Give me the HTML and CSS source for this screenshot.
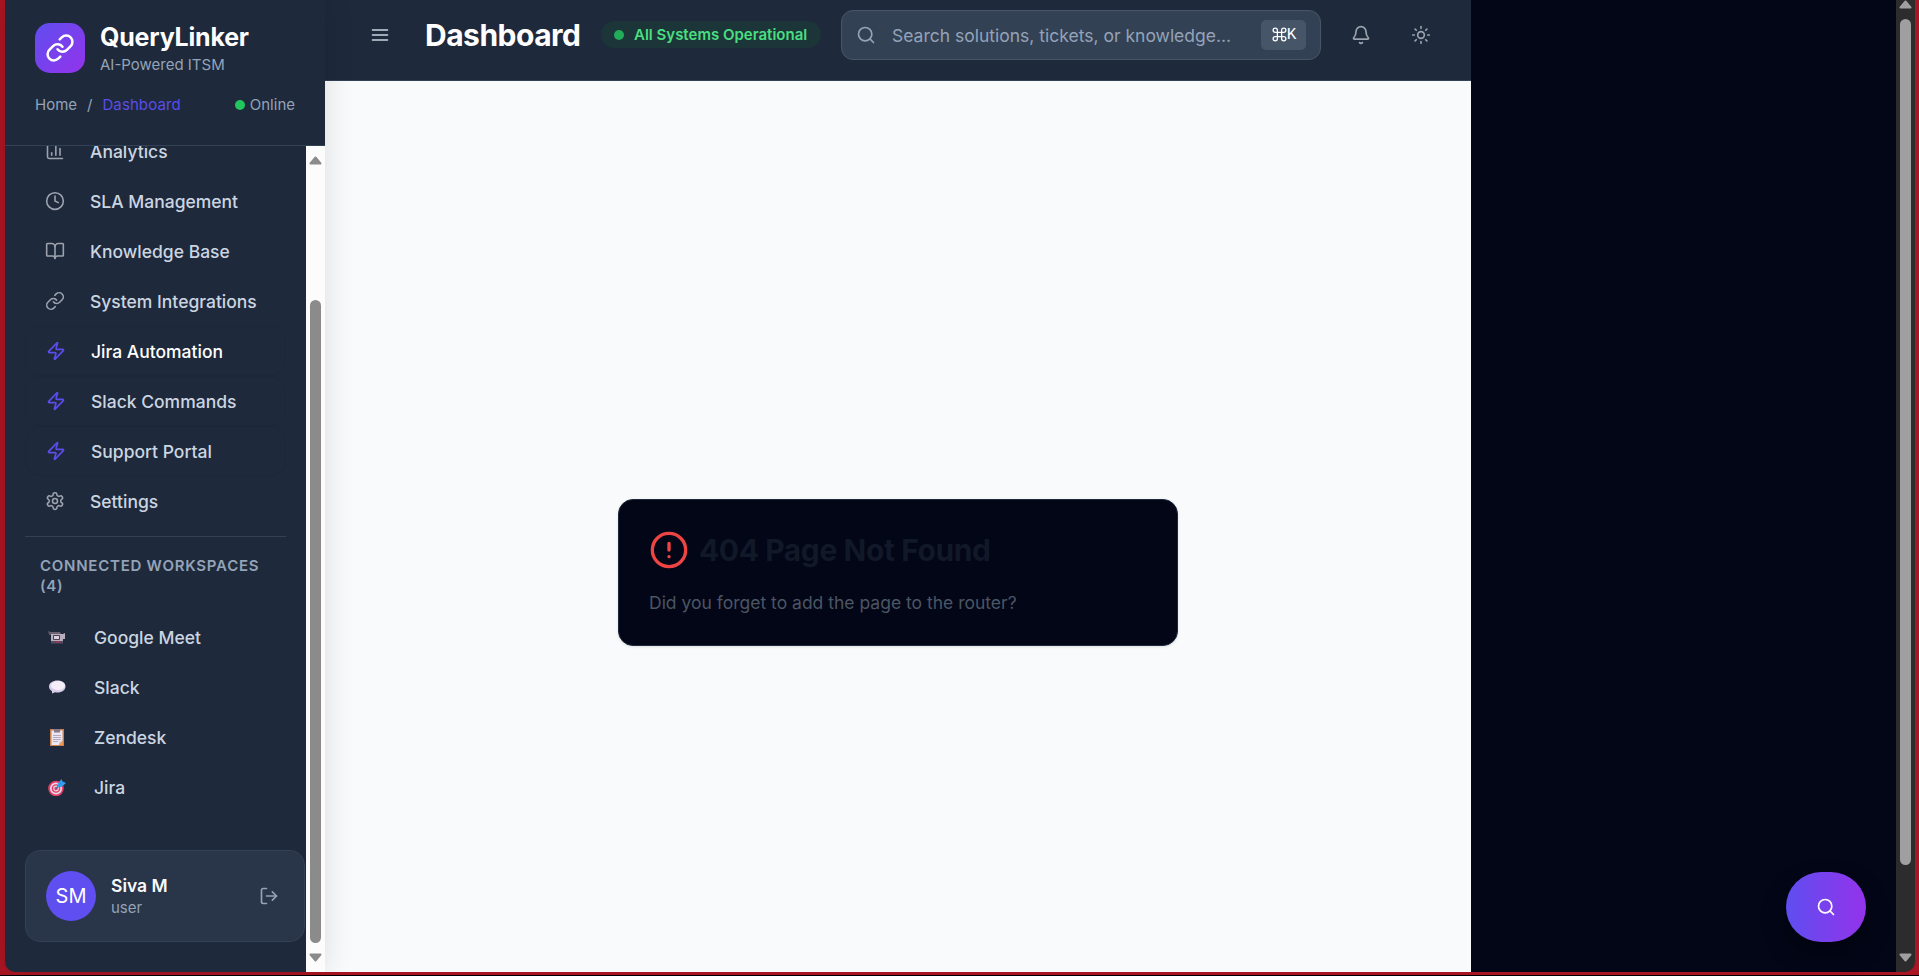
FILE: index.html
```html
<!DOCTYPE html>
<html lang="en">
<head>
<meta charset="utf-8">
<title>QueryLinker</title>
<link rel="stylesheet" href="styles.css">
</head>
<body>
<svg class="defs" aria-hidden="true">
  <symbol id="link" viewBox="0 0 24 24"><path d="M10 13a5 5 0 0 0 7.54.54l3-3a5 5 0 0 0-7.07-7.07l-1.72 1.71"/><path d="M14 11a5 5 0 0 0-7.54-.54l-3 3a5 5 0 0 0 7.07 7.07l1.71-1.71"/></symbol>
  <symbol id="zap" viewBox="0 0 24 24"><path d="M4 14a1 1 0 0 1-.78-1.63l9.9-10.2a.5.5 0 0 1 .86.46l-1.92 6.02A1 1 0 0 0 13 10h7a1 1 0 0 1 .78 1.63l-9.9 10.2a.5.5 0 0 1-.86-.46l1.92-6.02A1 1 0 0 0 11 14z"/></symbol>
  <symbol id="search" viewBox="0 0 24 24"><circle cx="11" cy="11" r="8"/><path d="m21 21-4.3-4.3"/></symbol>
</svg>
<div class="window">
  <aside class="sidebar">
    <header class="brand">
      <div class="brand-row">
        <div class="logo"><svg class="icon"><use href="#link"/></svg></div>
        <div>
          <div class="brand-name">QueryLinker</div>
          <div class="brand-sub">AI-Powered ITSM</div>
        </div>
      </div>
      <div class="crumbs">
        <span>Home</span><span class="slash">/</span><span class="current">Dashboard</span>
        <span class="online"><i class="dot"></i>Online</span>
      </div>
    </header>
    <div class="side-body">
      <div class="side-scroll">
        <nav class="nav">
          <a class="item"><svg class="icon" viewBox="0 0 24 24"><path d="M3 3v16a2 2 0 0 0 2 2h16"/><path d="M18 17V9"/><path d="M13 17V5"/><path d="M8 17v-3"/></svg>Analytics</a>
          <a class="item"><svg class="icon" viewBox="0 0 24 24"><circle cx="12" cy="12" r="10"/><path d="M12 6v6l4 2"/></svg>SLA Management</a>
          <a class="item"><svg class="icon" viewBox="0 0 24 24"><path d="M12 7v14"/><path d="M3 18a1 1 0 0 1-1-1V4a1 1 0 0 1 1-1h5a4 4 0 0 1 4 4 4 4 0 0 1 4-4h5a1 1 0 0 1 1 1v13a1 1 0 0 1-1 1h-6a3 3 0 0 0-3 3 3 3 0 0 0-3-3z"/></svg>Knowledge Base</a>
          <a class="item"><svg class="icon"><use href="#link"/></svg>System Integrations</a>
          <a class="item boxed active"><svg class="icon"><use href="#zap"/></svg>Jira Automation</a>
          <a class="item boxed"><svg class="icon"><use href="#zap"/></svg>Slack Commands</a>
          <a class="item boxed"><svg class="icon"><use href="#zap"/></svg>Support Portal</a>
          <a class="item"><svg class="icon" viewBox="0 0 24 24"><path d="M12.22 2h-.44a2 2 0 0 0-2 2v.18a2 2 0 0 1-1 1.73l-.43.25a2 2 0 0 1-2 0l-.15-.08a2 2 0 0 0-2.73.73l-.22.38a2 2 0 0 0 .73 2.73l.15.1a2 2 0 0 1 1 1.72v.51a2 2 0 0 1-1 1.74l-.15.09a2 2 0 0 0-.73 2.73l.22.38a2 2 0 0 0 2.73.73l.15-.08a2 2 0 0 1 2 0l.43.25a2 2 0 0 1 1 1.73V20a2 2 0 0 0 2 2h.44a2 2 0 0 0 2-2v-.18a2 2 0 0 1 1-1.73l.43-.25a2 2 0 0 1 2 0l.15.08a2 2 0 0 0 2.73-.73l.22-.39a2 2 0 0 0-.73-2.73l-.15-.08a2 2 0 0 1-1-1.74v-.5a2 2 0 0 1 1-1.74l.15-.09a2 2 0 0 0 .73-2.73l-.22-.38a2 2 0 0 0-2.73-.73l-.15.08a2 2 0 0 1-2 0l-.43-.25a2 2 0 0 1-1-1.73V4a2 2 0 0 0-2-2z"/><circle cx="12" cy="12" r="3"/></svg>Settings</a>
        </nav>
        <section class="spaces">
          <h2>Connected Workspaces (4)</h2>
          <a class="space"><svg class="emoji" viewBox="0 0 18 18"><path d="M0 3l3 1v3H1z" fill="#5d5262"/><path d="M1 4h11l1 2H3z" fill="#6d6273"/><path d="M3 6h12l2-1v6h-2v2H3z" fill="#b9aebd"/><path d="M5.500 7.500h6v4h-6z" fill="#d9d2dc" stroke="#4a3f55"/><path d="M3 13h12v2.500H3z" fill="#564a66"/><path d="M8 14h1m1 0h1" stroke="#d3304e"/></svg>Google Meet</a>
          <a class="space"><svg class="emoji" viewBox="0 0 18 18"><path d="M9.500 2.500C4.800 2.500 1 5 1 8.500c0 2 1.200 3.700 3 4.800V15.500l3-1.200c.8.200 1.600.2 2.500.2 4.700 0 8-2.600 8-6s-3.300-6-8-6z" fill="#d9cdea"/><ellipse cx="10" cy="7.600" rx="7" ry="4.600" fill="#f3eef8"/></svg>Slack</a>
          <a class="space"><svg class="emoji" viewBox="0 0 18 18"><path d="M2 1h14v17H2z" fill="#c98152"/><path d="M3.500 2.500h11V13l-3.500 4H3.500z" fill="#ece5f2"/><path d="M6 1h6v3.500H6z" fill="#85798c"/><path d="M5 7.500h8m-8 2h8m-8 2h8m-8 2h5" stroke="#aea3b8" stroke-width=".9"/><path d="M11 17l.5-3 3-1z" fill="#c4b9d0"/><path d="M15 13v4h-4z" fill="#f0994f"/></svg>Zendesk</a>
          <a class="space"><svg class="emoji" viewBox="0 0 18 18"><circle cx="8" cy="10.500" r="7.800" fill="#e63c68"/><circle cx="8" cy="10.500" r="5.200" fill="none" stroke="#e7d7e5" stroke-width="1.700"/><circle cx="8" cy="10.500" r="2.300" fill="none" stroke="#e7d7e5" stroke-width="1.200"/><path d="M8 10.500l4-4" stroke="#4c6fa0" stroke-width="1.300"/><path d="M9.500 6l4-5 .8 2.300L18 5l-4.500 4H10z" fill="#2f9df0"/></svg>Jira</a>
        </section>
        <div class="user">
          <div class="avatar">SM</div>
          <div class="user-text"><div class="user-name">Siva M</div><div class="user-role">user</div></div>
          <svg class="icon logout" viewBox="0 0 24 24"><path d="M9 21H5a2 2 0 0 1-2-2V5a2 2 0 0 1 2-2h4"/><path d="m16 17 5-5-5-5"/><path d="M21 12H9"/></svg>
        </div>
      </div>
      <div class="bar light">
        <svg class="arrow" viewBox="0 0 13 9"><path d="M6.500 1.500 11.500 7.500h-10z"/></svg>
        <div class="thumb"></div>
        <svg class="arrow" viewBox="0 0 13 9"><path d="M6.500 7.500 11.500 1.500h-10z"/></svg>
      </div>
    </div>
  </aside>
  <main class="main">
    <header class="topbar">
      <svg class="icon menu" viewBox="0 0 24 24"><path d="M3 6h18M3 12h18M3 18h18"/></svg>
      <h1>Dashboard</h1>
      <div class="status"><i class="dot"></i>All Systems Operational</div>
      <div class="search">
        <svg class="icon"><use href="#search"/></svg>
        <span>Search solutions, tickets, or knowledge...</span>
        <kbd><svg class="cmd" viewBox="0 0 24 24"><path d="M15 6v12a3 3 0 1 0 3-3H6a3 3 0 1 0 3 3V6a3 3 0 1 0-3 3h12a3 3 0 1 0-3-3"/></svg>K</kbd>
      </div>
      <svg class="icon bell" viewBox="0 0 24 24"><path d="M10.268 21a2 2 0 0 0 3.464 0"/><path d="M3.262 15.326A1 1 0 0 0 4 17h16a1 1 0 0 0 .74-1.673C19.410 13.956 18 12.499 18 8A6 6 0 0 0 6 8c0 4.499-1.411 5.956-2.738 7.326"/></svg>
      <svg class="icon sun" viewBox="0 0 24 24"><circle cx="12" cy="12" r="4"/><path d="M12 2v2M12 20v2M4.930 4.930l1.410 1.410M17.660 17.660l1.410 1.410M2 12h2M20 12h2M6.340 17.660l-1.410 1.410M19.070 4.930l-1.410 1.410"/></svg>
    </header>
    <div class="page">
      <div class="card">
        <div class="card-head">
          <svg class="icon" viewBox="0 0 24 24"><circle cx="12" cy="12" r="10"/><path d="M12 8v4M12 16h.01"/></svg>
          <h2>404 Page Not Found</h2>
        </div>
        <p>Did you forget to add the page to the router?</p>
      </div>
    </div>
  </main>
  <div class="rest"><button class="fab"><svg class="icon"><use href="#search"/></svg></button></div>
  <div class="bar dark">
    <svg class="arrow" viewBox="0 0 13 9"><path d="M6.500 1.500 11.500 7.500h-10z"/></svg>
    <div class="thumb"></div>
    <svg class="arrow" viewBox="0 0 13 9"><path d="M6.500 7.500 11.500 1.500h-10z"/></svg>
  </div>
</div>
</body>
</html>
```
FILE: styles.css
```css
* { box-sizing: border-box; }
body { margin: 0; background: #000; font-family: Inter, sans-serif; font-size: 17.5px; overflow: hidden; }
h1, h2, p { margin: 0; }
.defs { display: none; }
.icon { width: 20px; height: 20px; flex: none; fill: none; stroke: currentColor; stroke-width: 2; stroke-linecap: round; stroke-linejoin: round; }

.window { display: flex; height: 975px; padding: 0 4px 3px 5px; background: #a91522; }

.sidebar { display: flex; flex-direction: column; width: 320px; flex: none; background: #1e293b; border-bottom-left-radius: 10px; box-shadow: 0 0 30px rgba(0, 0, 0, .12); z-index: 1; overflow: clip; overflow-clip-margin: 40px; }
.brand { height: 146px; flex: none; padding: 23px 30px 0; border-bottom: 1px solid #334155; color: #94a3b8; font-size: 15px; }
.brand-row { display: flex; gap: 15px; height: 50px; }
.logo { display: grid; place-items: center; width: 50px; height: 50px; border-radius: 15px; background: linear-gradient(135deg, #5f4ef0, #9333ea); color: #fff; }
.logo .icon { width: 30px; height: 30px; }
.brand-name { color: #fff; font-size: 25px; font-weight: 700; line-height: 31px; letter-spacing: -.2px; margin-top: -1px; }
.brand-sub { line-height: 20px; margin-top: 2px; }
.crumbs { display: flex; align-items: center; margin-top: 22px; line-height: 20px; }
.slash { margin: 0 10px; }
.current { color: #5b4ceb; letter-spacing: .1px; }
.dot { width: 10px; height: 10px; border-radius: 50%; background: #22c55e; }
.online { display: flex; align-items: center; gap: 5px; margin-left: auto; }

.side-body { display: flex; flex: 1; min-height: 0; }
.side-scroll { display: flex; flex-direction: column; width: 301px; overflow: hidden; border-bottom-left-radius: 10px; }
.nav { margin: -20px 20px 0; padding-bottom: 10px; border-bottom: 1px solid #334155; flex: none; }
.item { display: flex; align-items: center; gap: 25px; height: 50px; padding-left: 20px; border-radius: 15px; color: #cbd5e1; font-weight: 500; white-space: nowrap; }
.item .icon { color: #9ca3af; stroke-width: 1.9; }
.boxed { border: 1px solid #1d2738; }
.boxed .icon { color: #5b4ceb; stroke-width: 2; }
.active { color: #fff; }
.spaces { padding: 19px 20px 0; flex: none; }
.spaces h2 { padding: 0 15px; margin-bottom: 16px; color: #94a3b8; font-size: 15px; font-weight: 600; line-height: 20px; letter-spacing: .75px; text-transform: uppercase; }
.space { display: flex; align-items: center; gap: 28px; height: 50px; padding-left: 23px; color: #cbd5e1; font-weight: 500; }
.emoji { width: 18px; height: 18px; }
.user { display: flex; align-items: center; width: 280px; height: 92px; flex: none; margin: 38px 0 0 20px; padding: 0 25px 0 20px; border: 1px solid #334155; border-radius: 15px; background: #293548; }
.avatar { display: grid; place-items: center; width: 50px; height: 50px; border-radius: 50%; background: #5f4ef0; color: #fff; font-size: 20px; }
.user-text { flex: 1; padding-left: 15px; }
.user-name { color: #f8fafc; font-weight: 600; line-height: 24px; }
.user-role { color: #94a3b8; font-size: 15px; line-height: 20px; }
.logout { color: #94a3b8; }

.bar { display: flex; flex-direction: column; align-items: center; width: 19px; flex: none; }
.arrow { width: 13px; height: 9px; flex: none; fill: currentColor; stroke: currentColor; stroke-width: 2; stroke-linejoin: round; }
.thumb { width: 11px; border-radius: 6px; background: currentColor; }
.light { padding-top: 10px; background: #fcfcfc; color: #8b8b8b; }
.light .thumb { height: 643px; margin: 135px 0 10px; }
.dark { background: #2c2c2c; color: #9f9f9f; border-bottom-right-radius: 10px; }
.dark .thumb { height: 846px; margin: 10px 0 88px; }

.main { display: flex; flex-direction: column; width: 1146px; flex: none; background: #f8fafc; }
.topbar { display: flex; align-items: center; height: 81px; flex: none; padding: 0 40px 11px 45px; background: #1e293b; border-bottom: 1px solid #334155; color: #9ca3af; }
.menu { color: #cbd5e1; }
.topbar h1 { width: 156px; margin: 0 20px 0 35px; color: #fff; font-size: 30px; font-weight: 700; letter-spacing: -.5px; white-space: nowrap; }
.status { display: flex; align-items: center; gap: 10px; width: 220px; height: 27px; padding-left: 13px; border-radius: 14px; background: #1c3539; color: #4ade80; font-size: 15px; font-weight: 600; white-space: nowrap; }
.status .dot { background: #22ab58; }
.search { display: flex; align-items: center; width: 480px; height: 50px; margin: 0 30px 0 20px; padding: 0 14px; border: 1px solid #475569; border-radius: 12px; background: #334155; color: #94a3b8; }
.search span { flex: 1; padding: 1px 0 0 16px; white-space: nowrap; }
.search kbd { display: flex; align-items: center; justify-content: center; width: 45px; height: 30px; border-radius: 5px; background: #475569; color: #fff; font: 16px "Liberation Mono", monospace; }
.cmd { width: 17px; height: 19px; margin-right: -1px; fill: none; stroke: currentColor; stroke-width: 1.8; }
.sun { margin-left: 40px; }

.page { display: grid; place-items: center; flex: 1; padding: 91px 0 0; }
.card { width: 560px; height: 147px; padding: 30px; border: 1px solid #1e293b; border-radius: 15px; background: #020617; box-shadow: 0 1px 3px rgba(0, 0, 0, .1); }
.card-head { display: flex; align-items: center; gap: 10px; height: 40px; }
.card-head .icon { width: 40px; height: 40px; color: #ef4444; }
.card h2 { color: #111827; font-size: 30px; font-weight: 700; letter-spacing: -.42px; }
.card p { margin-top: 20px; color: #4b5563; line-height: 25px; }

.rest { display: flex; align-items: flex-end; justify-content: flex-end; flex: 1; padding: 0 30px 30px 0; background: #020617; }
.fab { display: grid; place-items: center; width: 80px; height: 70px; border: 0; border-radius: 35px; background: linear-gradient(90deg, #5f4ef0, #9333ea); color: #fff; box-shadow: 0 12px 25px rgba(0, 0, 0, .4); }
```
